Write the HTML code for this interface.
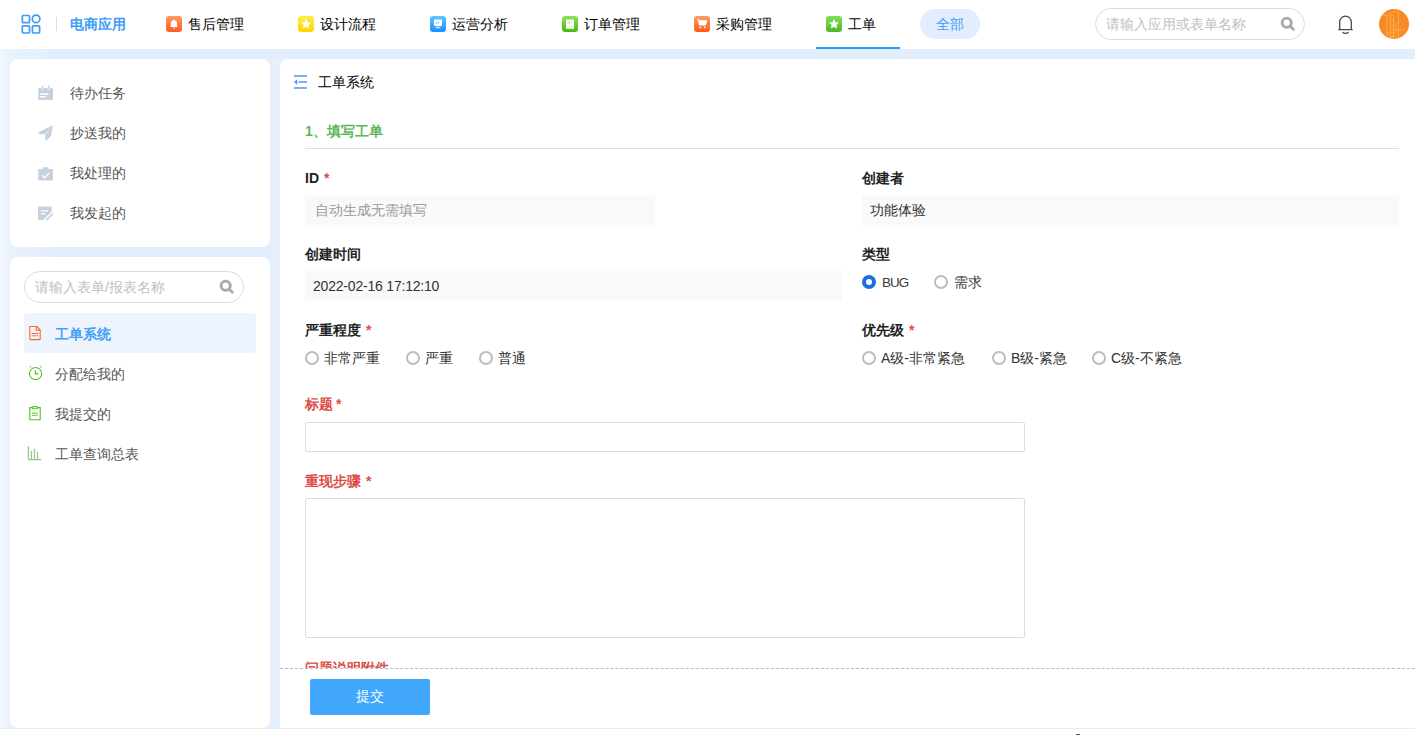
<!DOCTYPE html>
<html><head><meta charset="utf-8">
<style>
*{box-sizing:border-box;margin:0;padding:0}
html,body{width:1415px;height:735px;overflow:hidden;background:#fff}
body{position:relative;font-family:"Liberation Sans",sans-serif;font-size:14px;color:#333}
.a{position:absolute;white-space:nowrap;line-height:20px}
svg{position:absolute;display:block}
#hdr{position:absolute;left:0;top:0;width:1415px;height:49px;background:#fff}
#bg{position:absolute;left:0;top:49px;width:1415px;height:679px;background:#e2edfd}
.card{position:absolute;background:#fff;border-radius:8px}
.ni{position:absolute;top:16px;width:16px;height:16px;border-radius:3px}
.nt{top:14px;color:#000}
.lbl{font-weight:bold;color:#1f1f1f}
.req{color:#e04b45;font-weight:bold;margin-left:1px}
.red{color:#dc4d4a}
.inp{position:absolute;height:30px;background:#f9f9f9;border-radius:1px}
.radio{position:absolute;width:14px;height:14px;border-radius:50%;border:2px solid #bcbcbc;background:#fff}
.rt{color:#333}
.side{color:#555}
</style></head><body>
<div id="hdr"></div>
<div id="bg"></div>
<div style="position:absolute;left:0;top:49px;width:60px;height:679px;background:linear-gradient(90deg,#f3f7fe 0,#e8f1fd 10px,#e2edfd 60px)"></div>
<!-- header -->
<svg style="left:21px;top:14px" width="20" height="20" viewBox="0 0 20 20">
 <g fill="none" stroke="#3d9cf6" stroke-width="1.7">
  <rect x="1.3" y="1.5" width="7.2" height="7.2" rx="1"/>
  <circle cx="15.1" cy="4.9" r="3.8"/>
  <rect x="1.3" y="11.8" width="7.2" height="7.2" rx="1"/>
  <rect x="11.4" y="11.8" width="7.2" height="7.2" rx="1"/>
 </g>
</svg>
<div style="position:absolute;left:56px;top:17px;width:1px;height:14px;background:#ddd"></div>
<div class="a" style="left:70px;top:14px;color:#3d9cf6;font-weight:bold">电商应用</div>

<div class="ni" style="left:166px;background:linear-gradient(#ff9a5e,#ff5a22)"></div>
<svg style="left:166px;top:16px" width="16" height="16" viewBox="0 0 16 16"><path d="M8 3.5c-.5 0-.8.3-.8.7-1.5.4-2.3 1.6-2.3 3.1v2.4L4 11h8l-.9-1.3V7.3c0-1.5-.8-2.7-2.3-3.1 0-.4-.3-.7-.8-.7zM6.9 11.6a1.1 1.1 0 0 0 2.2 0z" fill="#fff"/></svg>
<div class="a nt" style="left:188px">售后管理</div>

<div class="ni" style="left:298px;background:linear-gradient(#ffec4d,#ffd400)"></div>
<svg style="left:298px;top:16px" width="16" height="16" viewBox="0 0 16 16"><path d="M8.00 3.60 L9.32 6.48 L12.47 6.85 L10.14 9.00 L10.76 12.10 L8.00 10.55 L5.24 12.10 L5.86 9.00 L3.53 6.85 L6.68 6.48z" fill="#fff" stroke="#fff" stroke-width=".5" stroke-linejoin="round"/></svg>
<div class="a nt" style="left:320px">设计流程</div>

<div class="ni" style="left:430px;background:linear-gradient(#5ec8ff,#1a8cff)"></div>
<svg style="left:430px;top:16px" width="16" height="16" viewBox="0 0 16 16"><rect x="4" y="3.6" width="8" height="6.4" rx=".8" fill="#fff"/><path d="M5.3 8l1.5-1.6 1.3 1 1.7-1.6" stroke="#6cc0ff" stroke-width=".9" fill="none"/><rect x="5.6" y="11.3" width="4.8" height="0.9" fill="#fff"/><rect x="7.6" y="10" width=".8" height="1.4" fill="#fff"/></svg>
<div class="a nt" style="left:452px">运营分析</div>

<div class="ni" style="left:562px;background:linear-gradient(#8fe05a,#45bb14)"></div>
<svg style="left:562px;top:16px" width="16" height="16" viewBox="0 0 16 16"><rect x="4" y="3.4" width="8" height="9.4" rx=".9" fill="#fff"/><rect x="5.2" y="5.5" width="5.2" height=".9" fill="#bfe9a6"/><rect x="5.2" y="7.2" width="3" height=".9" fill="#bfe9a6"/><rect x="9.3" y="10.2" width="1.4" height="1.2" fill="#9bd97a"/></svg>
<div class="a nt" style="left:584px">订单管理</div>

<div class="ni" style="left:694px;background:linear-gradient(#ff9a5e,#ff5a1e)"></div>
<svg style="left:694px;top:16px" width="16" height="16" viewBox="0 0 16 16"><path d="M3.2 3.3h1.3l.9 5.6h6.2l.9-4.2H5.2" stroke="#fff" stroke-width="1.1" fill="#fff" stroke-linejoin="round"/><circle cx="6.3" cy="11.3" r=".9" fill="#fff"/><circle cx="10.7" cy="11.3" r=".9" fill="#fff"/></svg>
<div class="a nt" style="left:716px">采购管理</div>

<div class="ni" style="left:826px;background:linear-gradient(#86dd5c,#4cb824)"></div>
<svg style="left:826px;top:16px" width="16" height="16" viewBox="0 0 16 16"><path d="M8.00 3.60 L9.32 6.48 L12.47 6.85 L10.14 9.00 L10.76 12.10 L8.00 10.55 L5.24 12.10 L5.86 9.00 L3.53 6.85 L6.68 6.48z" fill="#fff" stroke="#fff" stroke-width=".5" stroke-linejoin="round"/></svg>
<div class="a nt" style="left:848px">工单</div>
<div style="position:absolute;left:816px;top:47px;width:84px;height:2px;background:#2b9af6"></div>

<div style="position:absolute;left:920px;top:9px;width:60px;height:30px;border-radius:15px;background:#e3edfd"></div>
<div class="a" style="left:936px;top:14px;color:#3d9cf6">全部</div>

<div style="position:absolute;left:1095px;top:8px;width:210px;height:32px;border:1px solid #dcdcdc;border-radius:16px"></div>
<div class="a" style="left:1106px;top:14px;color:#c0c0c0">请输入应用或表单名称</div>
<svg style="left:1276px;top:12px" width="24" height="24" viewBox="0 0 24 24"><circle cx="10.7" cy="10.7" r="4.6" stroke="#a9a9a9" stroke-width="2.9" fill="none"/><path d="M14.2 14.2l3.1 3" stroke="#a9a9a9" stroke-width="2.9" stroke-linecap="round"/></svg>

<svg style="left:1334px;top:12px" width="24" height="24" viewBox="0 0 24 24"><path d="M4.3 17.6h14.4M5.7 17.6v-7.6a5.8 5.8 0 0 1 11.6 0v7.6" stroke="#4a4a4a" stroke-width="1.3" fill="none"/><path d="M8.4 20.3q3.1 2.1 6.2 0" stroke="#4a4a4a" stroke-width="1.3" fill="none"/></svg>
<svg style="left:1379px;top:9px" width="30" height="30" viewBox="0 0 30 30"><defs><clipPath id="cav"><circle cx="15" cy="15" r="15"/></clipPath></defs><g clip-path="url(#cav)"><rect width="30" height="30" fill="#f78a24"/>
<g stroke="#fbb24c" stroke-width="0.9" fill="none">
<path d="M19.3 1v29M11.5 3v27M14.6 8v22M8 7v20M3 6.3h12M10 21h15M12 16.5h5M8 24h8M10 27.5h7M12 11h3"/>
</g><g stroke="#fac060" stroke-width="0.6" opacity=".8"><path d="M16.8 14v10M13 3h4"/></g></g></svg>

<div style="position:absolute;left:270px;top:59px;width:10px;height:669px;background:#e6f0fd"></div>
<!-- left cards -->
<div class="card" style="left:10px;top:59px;width:260px;height:188px"></div>
<div class="card" style="left:10px;top:257px;width:260px;height:471px;border-bottom-left-radius:8px;border-bottom-right-radius:8px"></div>

<svg style="left:38px;top:85px" width="16" height="16" viewBox="0 0 16 16"><rect x="0.3" y="3" width="14.7" height="12" rx="1" fill="#c6d1df"/><rect x="3.6" y="0.5" width="2" height="4.2" rx=".6" fill="#c6d1df" stroke="#fff" stroke-width=".5"/><rect x="10" y="0.5" width="2" height="4.2" rx=".6" fill="#c6d1df" stroke="#fff" stroke-width=".5"/><rect x="2.1" y="8.4" width="8.6" height="1.5" fill="#fff"/><rect x="2.1" y="11" width="5.6" height="1.5" fill="#fff"/></svg>
<div class="a side" style="left:70px;top:83px">待办任务</div>
<svg style="left:38px;top:125px" width="16" height="17" viewBox="0 0 16 17"><path d="M0 7.6L15 0 7.4 8.7 2.4 9.4z M15 0L12.9 11.3 7.4 16.3 7.2 10z" fill="#c6d1df"/></svg>
<div class="a side" style="left:70px;top:123px">抄送我的</div>
<svg style="left:38px;top:167px" width="16" height="14" viewBox="0 0 16 14"><path d="M0.3 2h4.5V0.3h5.6V2h4.5v11.5H0.3z" fill="#c6d1df"/><path d="M4 8.5l2.5 2.3 4.5-4.5" stroke="#fff" stroke-width="1.4" fill="none"/></svg>
<div class="a side" style="left:70px;top:163px">我处理的</div>
<svg style="left:38px;top:206px" width="16" height="14" viewBox="0 0 16 14"><path d="M0 0.4h13.6v5.2L5.2 14H0z" fill="#c6d1df"/><rect x="2.8" y="4.2" width="7.2" height="1.3" fill="#fff"/><rect x="2.8" y="7.2" width="4.5" height="1.3" fill="#fff"/><path d="M7.5 13.8l6.8-6.8 1.2 1.2-6.8 6.8z" fill="#c6d1df"/></svg>
<div class="a side" style="left:70px;top:203px">我发起的</div>

<div style="position:absolute;left:24px;top:271px;width:220px;height:32px;border:1px solid #dcdcdc;border-radius:16px"></div>
<div class="a" style="left:35px;top:277px;color:#c0c0c0">请输入表单/报表名称</div>
<svg style="left:215px;top:275px" width="24" height="24" viewBox="0 0 24 24"><circle cx="10.7" cy="10.7" r="4.6" stroke="#a9a9a9" stroke-width="2.9" fill="none"/><path d="M14.2 14.2l3.1 3" stroke="#a9a9a9" stroke-width="2.9" stroke-linecap="round"/></svg>

<div style="position:absolute;left:24px;top:313px;width:232px;height:40px;border-radius:4px;background:#edf4fe"></div>
<svg style="left:28px;top:325px" width="14" height="16" viewBox="0 0 14 16"><path d="M1.8 1.5h7l3.4 3.3v9.2a.6.6 0 0 1-.6.6H2.4a.6.6 0 0 1-.6-.6z" stroke="#ff6a1f" stroke-width="1.1" fill="none"/><path d="M8.3 1.6v3.5h3.6" stroke="#ff6a1f" stroke-width="1.1" fill="none"/><rect x="3.6" y="8" width="6.8" height="1" fill="#ff6a1f"/><rect x="3.6" y="10.1" width="6.8" height="1.2" fill="#ff8f73"/></svg>
<div class="a" style="left:55px;top:324px;color:#42a0f6;font-weight:bold">工单系统</div>
<svg style="left:28px;top:365px" width="16" height="16" viewBox="0 0 16 16"><circle cx="7.6" cy="8.6" r="6.1" stroke="#52c41a" stroke-width="1.1" fill="none"/><path d="M7.3 5.2v3.7h3" stroke="#52c41a" stroke-width="1.2" fill="none"/><path d="M1.6 2.4l1.6-1.2M13.6 2.4l-1.6-1.2" stroke="#7fd15a" stroke-width="1.1"/></svg>
<div class="a side" style="left:55px;top:364px">分配给我的</div>
<svg style="left:28px;top:406px" width="14" height="16" viewBox="0 0 14 16"><path d="M4 1.6H1.8v12.2h10.4V1.6H10" stroke="#52c41a" stroke-width="1.1" fill="none"/><rect x="4.3" y="0.6" width="5.4" height="2.2" rx="1.1" stroke="#52c41a" stroke-width="1.1" fill="#fff"/><rect x="4" y="6.7" width="6" height="1" fill="#52c41a"/><rect x="4" y="8.8" width="6" height="1.2" fill="#8cc97a"/></svg>
<div class="a side" style="left:55px;top:404px">我提交的</div>
<svg style="left:27px;top:445px" width="16" height="16" viewBox="0 0 16 16"><path d="M1.4 1v13.6h13" stroke="#90cb84" stroke-width="1.2" fill="none"/><path d="M4.5 6v8.4M7.5 3.8v10.6M10.5 7v7.4" stroke="#90cb84" stroke-width="1.2"/></svg>
<div class="a side" style="left:55px;top:444px">工单查询总表</div>

<!-- right panel -->
<div style="position:absolute;left:280px;top:59px;width:1135px;height:669px;background:#fff;border-top-left-radius:8px"></div>
<svg style="left:294px;top:75px" width="14" height="14" viewBox="0 0 14 14"><rect x="0" y="0" width="13" height="2" fill="#7cb0f9"/><rect x="4.5" y="6" width="8.5" height="2" fill="#7cb0f9"/><rect x="0" y="12" width="13" height="2" fill="#7cb0f9"/><path d="M0 7l3.2-2.8v5.6z" fill="#4a94f6"/></svg>
<div class="a" style="left:318px;top:72px;color:#000">工单系统</div>

<div class="a" style="left:305px;top:121px;color:#5cb85c;font-weight:bold">1、填写工单</div>
<div style="position:absolute;left:305px;top:148px;width:1094px;height:1px;background:#ddd"></div>

<div class="a lbl" style="left:305px;top:168px">ID <span class="req">*</span></div>
<div class="inp" style="left:305px;top:195px;width:350px"></div>
<div class="a" style="left:315px;top:200px;color:#999">自动生成无需填写</div>

<div class="a lbl" style="left:862px;top:168px">创建者</div>
<div class="inp" style="left:862px;top:195px;width:537px"></div>
<div class="a" style="left:870px;top:200px;color:#333">功能体验</div>

<div class="a lbl" style="left:305px;top:244px">创建时间</div>
<div class="inp" style="left:305px;top:271px;width:537px"></div>
<div class="a" style="left:313px;top:276px;color:#333;letter-spacing:-0.2px">2022-02-16 17:12:10</div>

<div class="a lbl" style="left:862px;top:244px">类型</div>
<div class="radio" style="left:862px;top:275px;border:4px solid #1a6fe0"></div>
<div class="a rt" style="left:882px;top:272.5px;font-size:13.4px;letter-spacing:-0.9px;color:#3a3a3a">BUG</div>
<div class="radio" style="left:934px;top:275px"></div>
<div class="a rt" style="left:954px;top:272px">需求</div>

<div class="a lbl" style="left:305px;top:320px">严重程度 <span class="req">*</span></div>
<div class="radio" style="left:305px;top:351px"></div>
<div class="a rt" style="left:324px;top:348px">非常严重</div>
<div class="radio" style="left:406px;top:351px"></div>
<div class="a rt" style="left:425px;top:348px">严重</div>
<div class="radio" style="left:479px;top:351px"></div>
<div class="a rt" style="left:498px;top:348px">普通</div>

<div class="a lbl" style="left:862px;top:320px">优先级 <span class="req">*</span></div>
<div class="radio" style="left:862px;top:351px"></div>
<div class="a rt" style="left:881px;top:348px">A级-非常紧急</div>
<div class="radio" style="left:992px;top:351px"></div>
<div class="a rt" style="left:1011px;top:348px">B级-紧急</div>
<div class="radio" style="left:1092px;top:351px"></div>
<div class="a rt" style="left:1111px;top:348px">C级-不紧急</div>

<div class="a lbl red" style="left:305px;top:394px">标题 <span class="req" style="margin-left:-1px">*</span></div>
<div style="position:absolute;left:305px;top:422px;width:720px;height:30px;border:1px solid #dcdcdc;border-radius:2px"></div>

<div class="a lbl red" style="left:305px;top:471px">重现步骤 <span class="req">*</span></div>
<div style="position:absolute;left:305px;top:498px;width:720px;height:140px;border:1px solid #dcdcdc;border-radius:2px"></div>

<div style="position:absolute;left:305px;top:648px;width:120px;height:20px;overflow:hidden">
 <div class="a lbl red" style="left:0;top:10px">问题说明附件</div>
</div>
<div style="position:absolute;left:280px;top:668px;width:1135px;height:0;border-top:1px dashed #bbb"></div>

<div style="position:absolute;left:310px;top:679px;width:120px;height:36px;border-radius:2px;background:#41a7fd"></div>
<div class="a" style="left:356px;top:686px;color:#fff">提交</div>

<div style="position:absolute;left:0;top:728px;width:1415px;height:1px;background:#ebebeb"></div>
<div style="position:absolute;left:1076px;top:734px;width:4px;height:1px;background:#555"></div>
</body></html>
